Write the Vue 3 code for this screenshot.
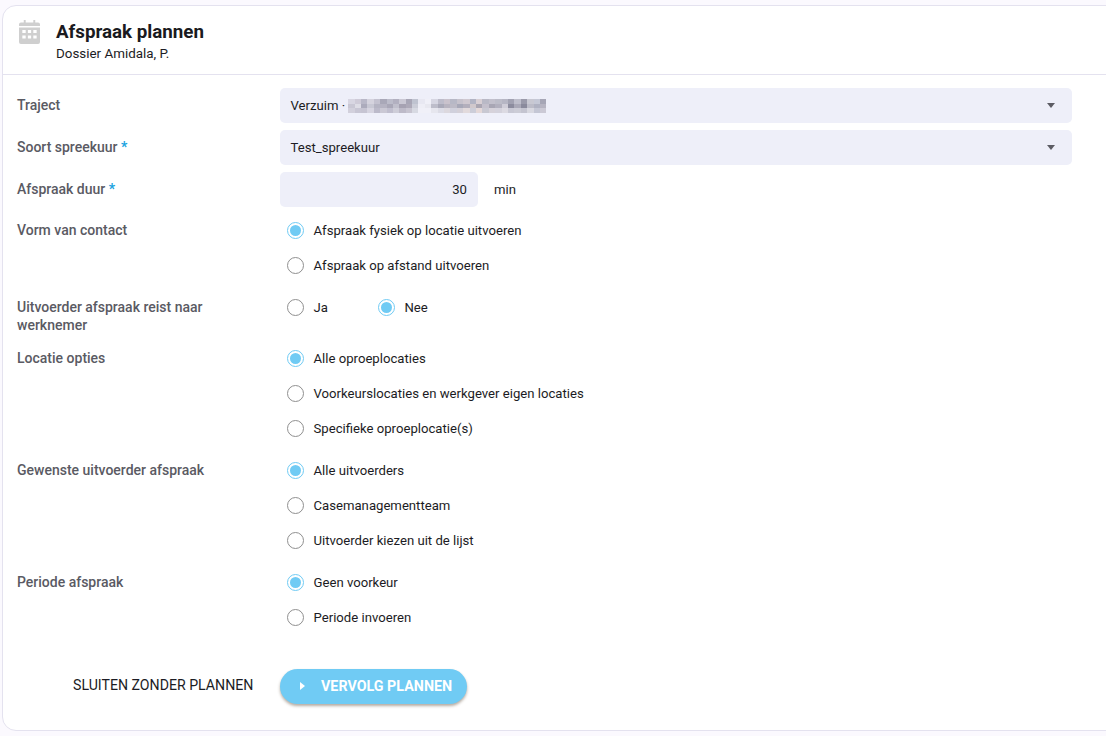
<script setup>
const rawNoise = [
  ['#eef0f8','#d8d6e2','#cfcbd8','#b9b8c8','#d5d3de','#c4c2d0','#a9a8b8','#bcbcca','#b2b0c0','#cac8d4','#a8a6b6','#bfc3d0','#c5c8d6','#a6a6b6','#e8e8f2','#f0f0f8','#d6d6e2','#bdbcca','#c9c2cc','#b7b8c6','#c6c2cc','#cfc8d0','#b2b4c4','#d8cfd4','#b9b9c6','#c2c0cc','#bcbcc8','#b6b6c4','#a2a2b2','#bebecb','#9a9aaa','#c8c8d2'],
  ['#f0f0f8','#c9c7d4','#dedde6','#acabbc','#c8c8d4','#b5b4c3','#b5b3c2','#a9a7b7','#c0bfcc','#a6a2b2','#ada9b8','#cbcdd8','#b0b2c2','#b6b4c2','#eeeef6','#e8e8f0','#bdbdca','#a9a9b8','#b8b4c0','#bcbac6','#a7a8b8','#b3afbc','#d0c8cc','#aaa6b2','#c4c0cc','#a8a6b4','#b2b0be','#cfcdd8','#8c8c9e','#aaa9b8','#8a8a9c','#bcbcc8'],
  ['#f0f0f8','#d2d0dc','#c8c6d4','#c6c4d2','#d6d4e0','#bcbaca','#cac8d4','#c0bece','#cecdd8','#bdbac8','#c7c4d0','#d7d9e2','#c4c6d4','#cbc9d5','#f0f0f8','#f0f0f8','#e6e6ee','#dcdce6','#dcd8de','#d0d0dc','#d4d0d8','#e2dadc','#cccdd8','#e4d8d8','#c8c8d2','#d6d2da','#d4d2dc','#dcdae2','#c8c8d4','#ccccd6','#c4c4d0','#d8d8e0'],
]
const noise = rawNoise.map((l) => [...l.slice(1, 12), ...l.slice(14), ...l.slice(12, 14)])
const rows = [
  { label: 'Vorm van contact', opts: [['Afspraak fysiek op locatie uitvoeren', true], ['Afspraak op afstand uitvoeren', false]] },
  { label: 'Uitvoerder afspraak reist naar werknemer', inline: true, opts: [['Ja', false], ['Nee', true]] },
  { label: 'Locatie opties', opts: [['Alle oproeplocaties', true], ['Voorkeurslocaties en werkgever eigen locaties', false], ['Specifieke oproeplocatie(s)', false]] },
  { label: 'Gewenste uitvoerder afspraak', opts: [['Alle uitvoerders', true], ['Casemanagementteam', false], ['Uitvoerder kiezen uit de lijst', false]] },
  { label: 'Periode afspraak', opts: [['Geen voorkeur', true], ['Periode invoeren', false]] },
]
</script>

<template>
  <div class="page">
    <section class="card">
      <header class="head">
        <svg class="cal" width="21" height="24" viewBox="0 0 22 24" preserveAspectRatio="none" aria-hidden="true">
          <path fill="#cfcfcf" fill-rule="evenodd" d="M5 0h2v2.500h8V0h2v2.500h3a2 2 0 0 1 2 2V6H0V4.500a2 2 0 0 1 2-2h3zM0 7.500h22V22a2 2 0 0 1-2 2H2a2 2 0 0 1-2-2zM3.500 10v3h3.500v-3zM9.300 10v3h3.400v-3zM15 10v3h3.500v-3zM3.500 15.500v3h3.500v-3zM9.300 15.500v3h3.400v-3zM15 15.500v3h3.500v-3z"/>
        </svg>
        <div>
          <h1>Afspraak plannen</h1>
          <p>Dossier Amidala, P.</p>
        </div>
      </header>

      <div class="form">
        <div class="row">
          <label class="lbl ctl">Traject</label>
          <div class="select">
            <span class="val">Verzuim ·</span>
            <span class="blur">
              <span v-for="(line, i) in noise" :key="i" class="blur-line">
                <i v-for="(c, j) in line" :key="j" :style="{ background: c }"></i>
              </span>
            </span>
            <span class="caret"></span>
          </div>
        </div>
        <div class="row">
          <label class="lbl ctl">Soort spreekuur <b>*</b></label>
          <div class="select">
            <span class="val">Test_spreekuur</span>
            <span class="caret"></span>
          </div>
        </div>
        <div class="row">
          <label class="lbl ctl">Afspraak duur <b>*</b></label>
          <div class="duration">30</div>
          <span class="unit">min</span>
        </div>

        <div v-for="r in rows" :key="r.label" class="row top">
          <label class="lbl">{{ r.label }}</label>
          <div class="opts" :class="{ inline: r.inline }">
            <div v-for="o in r.opts" :key="o[0]" class="opt">
              <span class="radio" :class="{ on: o[1] }"></span>
              <span>{{ o[0] }}</span>
            </div>
          </div>
        </div>

        <div class="actions">
          <span class="close">SLUITEN ZONDER PLANNEN</span>
          <button class="next" type="button"><span class="tri"></span>VERVOLG PLANNEN</button>
        </div>
      </div>
    </section>
  </div>
</template>

<style>
html, body { margin: 0; background: #fbf9fe; }
</style>

<style scoped>
.page {
  height: 736px;
  box-sizing: border-box;
  padding: 5px 0 0 2px;
  overflow: hidden;
  font-family: Roboto, "Liberation Sans", sans-serif;
  font-size: 13.150px;
  color: #1c1c24;
}
.card {
  width: 1120px;
  height: 726px;
  box-sizing: border-box;
  background: #fff;
  border: 1px solid #e4e2ef;
  border-radius: 14px;
}
.head {
  height: 69px;
  box-sizing: border-box;
  border-bottom: 1px solid #e4e2ef;
  display: flex;
  padding: 15px 0 0 16px;
  gap: 16px;
}
.cal { margin-top: -1px; }
h1 { margin: 0; font-size: 18.750px; line-height: 22px; font-weight: 700; color: #1a1a20; }
p { margin: 3px 0 0; font-size: 13.400px; line-height: 16px; }
.form { padding: 13px 0 0 14px; display: flex; flex-direction: column; gap: 7px; }
.row { display: flex; align-items: center; }
.row.top { align-items: flex-start; }
.lbl {
  width: 263px;
  flex: none;
  box-sizing: border-box;
  padding-right: 30px;
  font-size: 14px;
  font-weight: 500;
  color: #5a5a63;
  line-height: 18px;
  padding-top: 7px;
}
.lbl.ctl { padding-top: 0; margin-top: -1px; }
.lbl b { color: #1aa3e0; font-weight: 700; }
.select {
  width: 792px;
  height: 35px;
  box-sizing: border-box;
  background: #eeeff9;
  border-radius: 5px;
  display: flex;
  align-items: center;
  padding: 0 10px 0 10.500px;
}
.val { white-space: pre; }
.blur { display: flex; flex-direction: column; margin: 1px 0 0 3px; }
.blur-line { display: flex; height: 4.500px; }
.blur-line i { width: 6.400px; height: 100%; display: block; }
.caret {
  margin-left: auto;
  margin-right: 7px;
  margin-bottom: 1px;
  width: 0;
  height: 0;
  border-left: 4px solid transparent;
  border-right: 4px solid transparent;
  border-top: 5px solid #5c5c64;
}
.duration {
  width: 198px;
  height: 35px;
  box-sizing: border-box;
  background: #eeeff9;
  border-radius: 5px;
  padding-right: 11px;
  text-align: right;
  line-height: 35px;
}
.unit { margin-left: 16px; }
.opts { display: flex; flex-direction: column; padding-bottom: 1px; margin-top: -1px; }
.opts.inline { flex-direction: row; gap: 43px; padding-bottom: 10px; }
.opt { height: 35px; display: flex; align-items: center; gap: 9.500px; padding-left: 7px; }
.radio {
  width: 17px;
  height: 17px;
  box-sizing: border-box;
  border: 1px solid #8f8f8f;
  border-radius: 50%;
  background: #fff;
  flex: none;
  position: relative;
}
.radio.on { border-color: #70cbf4; }
.radio.on::after {
  content: "";
  position: absolute;
  inset: 2px;
  border-radius: 50%;
  background: #70cbf4;
}
.actions { display: flex; align-items: center; margin-top: 26px; }
.close { width: 238px; box-sizing: border-box; padding-left: 56px; padding-bottom: 3px; white-space: nowrap; margin-right: 25px; font-size: 14.150px; }
.next {
  height: 35px;
  width: 187px;
  border: 0;
  border-radius: 18px;
  background: #70cbf4;
  color: #fff;
  font: 700 14.300px Roboto, "Liberation Sans", sans-serif;
  box-shadow: 0 2px 3px rgba(90, 70, 50, 0.45);
  display: flex;
  align-items: center;
  padding: 0 0 1px 20px;
}
.tri {
  width: 0;
  height: 0;
  border-top: 4px solid transparent;
  border-bottom: 4px solid transparent;
  border-left: 5px solid #fff;
  margin-right: 16px;
}
</style>
